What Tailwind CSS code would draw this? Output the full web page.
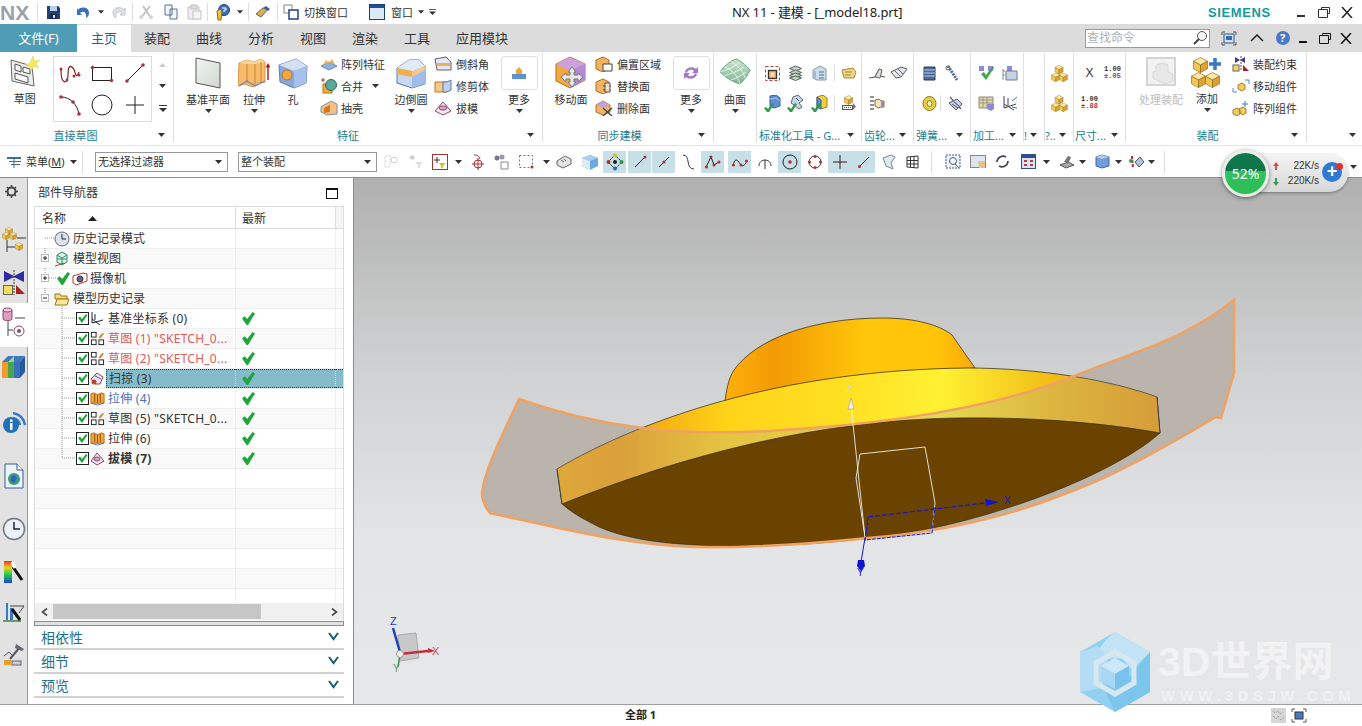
<!DOCTYPE html>
<html lang="zh">
<head>
<meta charset="utf-8">
<title>NX 11</title>
<script src="https://cdn.jsdelivr.net/npm/@tailwindcss/browser@4"></script>
</head>
<body class="m-0 overflow-hidden bg-white">
<svg class="absolute w-0 h-0">
  <symbol id="cap" viewBox="0 0 7 4"><path d="M0 0h7L3.5 4z" fill="#333"/></symbol>
  <symbol id="ck" viewBox="0 0 14 14"><path d="M0 7l3-2.500 2.500 3L11.500 0 14 1.500 6.500 14h-1.500z" fill="#1fa53a"/></symbol>
  <symbol id="gck" viewBox="0 0 10 9"><path d="M0 5l2-1 2 2 4-6 2 1-5 8H3z" fill="#2e9a4a"/></symbol>
  <symbol id="cb" viewBox="0 0 13 13"><rect x=".5" y=".5" width="12" height="12" fill="#fff" stroke="#222"/><path d="M2 6l2-1.500 2 2.500 4-5 1.500 1-5.500 8z" fill="#1fa53a"/></symbol>
  <symbol id="sk" viewBox="0 0 16 16"><g fill="#fff" stroke="#222"><rect x="1.500" y="1.500" width="5" height="5"/><rect x="1.500" y="9.500" width="5" height="5"/><rect x="9.500" y="9.500" width="5" height="5"/></g><path d="M9 7l4-5 2 1-4 5z" fill="#d8882a"/></symbol>
  <symbol id="ex" viewBox="0 0 16 16"><path d="M1 3l3-1 4 2 4-2 3 1v10H1z" fill="#f2a83c" stroke="#b86a10"/><path d="M5 3v9M8 4v9M11 3v9" stroke="#8a4c08"/><path d="M1 13l7 2 7-2" stroke="#5a6fc0" fill="none"/></symbol>
  <symbol id="cube" viewBox="0 0 16 17"><path d="M8 .5l7.500 4-7.500 4-7.500-4z" fill="#fbe8a6" stroke="#8a6a20" stroke-width=".7"/><path d="M.5 4.500l7.500 4v8l-7.500-4z" fill="#f3c850" stroke="#8a6a20" stroke-width=".7"/><path d="M15.500 4.500l-7.500 4v8l7.500-4z" fill="#dca232" stroke="#8a6a20" stroke-width=".7"/></symbol>
  <symbol id="yc" viewBox="0 0 20 20"><use href="#cube" x="4" y="0" width="11" height="11"/><use href="#cube" x="0" y="9" width="11" height="11"/><use href="#cube" x="9" y="9" width="11" height="11"/></symbol>
  <symbol id="more" viewBox="0 0 8 7"><path d="M0 .5h8" stroke="#333"/><path d="M0 3h8L4 7z" fill="#333"/></symbol>
</svg>

<div class="relative w-[1362px] h-[726px] overflow-hidden flex flex-col bg-white text-[#333] [font-family:'Noto_Sans','Noto_Sans_CJK_SC',sans-serif]">

  <!-- title bar -->
  <header class="h-[24px] flex items-center shrink-0 bg-white">
    <div class="w-[732px] flex items-center h-full">
      <div class="w-[37px] text-[21px] leading-none font-bold text-[#9aa1a8] [font-family:'Liberation_Sans',sans-serif]">NX</div>
      <div class="w-px h-[18px] bg-[#ddd]"></div>
      <div class="w-[30px] flex justify-center"><svg width="15" height="15"><path d="M1 1h11l2 2v11H1z" fill="#24406e"/><rect x="4" y="1" width="7" height="5" fill="#b9d0ee"/><rect x="4" y="9" width="7" height="5" fill="#16294a"/><rect x="7" y="10" width="2" height="3" fill="#d7e2f2"/></svg></div>
      <div class="w-[30px] flex justify-center"><svg width="15" height="14"><path d="M2 5c3-4 11-3 11 3 0 2-1 4-3 5 1-5-2-8-6-5l2 2H1V3z" fill="#3a6fc0"/></svg></div>
      <div class="w-[6px] flex justify-center"><svg width="6" height="4"><use href="#cap"/></svg></div>
      <div class="w-[28px] flex justify-center"><svg width="15" height="14"><path d="M13 5C10 1 2 2 2 8c0 2 1 4 3 5-1-5 2-8 6-5L9 10h5V3z" fill="#dde0e4" stroke="#c4c8cc"/></svg></div>
      <div class="w-px h-[18px] bg-[#ddd]"></div>
      <div class="w-[26px] flex justify-center"><svg width="16" height="16"><path d="M3 14l9-12M13 14L5 2" stroke="#c5c5c5" stroke-width="2"/><circle cx="3" cy="13" r="2" fill="#d5d5d5"/><circle cx="13" cy="13" r="2" fill="#d5d5d5"/></svg></div>
      <div class="w-[23px] flex justify-center"><svg width="14" height="16"><path d="M1 1h7v10H1zM6 5h7v10H6z" fill="#f4f6fa" stroke="#5a6f96"/></svg></div>
      <div class="w-[25px] flex justify-center"><svg width="15" height="16"><rect x="1" y="3" width="11" height="12" fill="#eee" stroke="#c4c4c4"/><rect x="4" y="1" width="6" height="4" fill="#ddd" stroke="#c4c4c4"/><rect x="6" y="7" width="8" height="8" fill="#f6f6f6" stroke="#c4c4c4"/></svg></div>
      <div class="w-px h-[18px] bg-[#ddd]"></div>
      <div class="w-[27px] flex justify-center"><svg width="18" height="18"><circle cx="11" cy="7" r="5.500" fill="#3e6fb8" stroke="#1d3f7a"/><path d="M4 8l3-2 2 2-1 9H5z" fill="#f0c23e" stroke="#8a6a10"/><path d="M9 5h4v2h-2v2" fill="none" stroke="#fff"/></svg></div>
      <div class="w-[10px] flex justify-center"><svg width="6" height="4"><use href="#cap"/></svg></div>
      <div class="w-[3px]"></div>
      <div class="w-px h-[18px] bg-[#ddd]"></div>
      <div class="w-[28px] flex justify-center"><svg width="16" height="14"><path d="M1 9l7-6 5 1-7 8z" fill="#d8b060" stroke="#7a6030"/><path d="M8 3l3-2 4 3-2 2z" fill="#3a5fb0"/></svg></div>
      <div class="w-px h-[18px] bg-[#ddd]"></div>
      <div class="w-[25px] flex justify-center"><svg width="16" height="16"><rect x="1" y="1" width="8" height="8" fill="#fff" stroke="#888"/><rect x="6" y="6" width="9" height="9" fill="#fff" stroke="#1f3f90" stroke-width="1.500"/></svg></div>
      <div class="text-[11px] leading-none w-[66px] pl-[1px]">切换窗口</div>
      <div class="w-[22px] flex justify-start"><svg width="16" height="16"><rect x=".5" y=".5" width="15" height="15" fill="#dce9f7" stroke="#1f3f7a"/><path d="M1 1h14v3H1z" fill="#1f4f9a"/></svg></div>
      <div class="text-[11px] leading-none w-[25px]">窗口</div>
      <div class="w-[9px] flex justify-center"><svg width="6" height="4"><use href="#cap"/></svg></div>
      <div class="w-[14px] flex justify-center"><svg width="7" height="6"><use href="#more"/></svg></div>
    </div>
    <div class="w-[476px] text-[13px] leading-none tracking-[-0.1px] text-[#222] whitespace-nowrap">NX 11 - 建模 - [_model18.prt]</div>
    <div class="w-[82px] text-[13px] leading-none font-bold tracking-[0.6px] text-[#159a9c] [font-family:'Liberation_Sans',sans-serif]">SIEMENS</div>
    <div class="w-[22px] flex justify-center pt-[8px]"><div class="w-[8px] h-[2px] bg-[#333]"></div></div>
    <div class="w-[24px] flex justify-center"><svg width="12" height="11"><path d="M3.500 2.500v-2h8v6h-2M.5 2.500h9v8h-9z" fill="none" stroke="#333"/></svg></div>
    <div class="w-[22px] flex justify-center"><svg width="12" height="11"><path d="M1 0l10 11M11 0L1 11" stroke="#222" stroke-width="1.500"/></svg></div>
  </header>

  <!-- tab bar -->
  <nav class="h-[28px] shrink-0 flex items-center bg-[#dcdcdc] text-[13px] leading-none">
    <div class="w-[77px] h-full flex items-center justify-center bg-[#4f9cb6] text-white">文件(F)</div>
    <div class="w-[54px] h-[27px] mt-px flex items-center justify-center bg-white text-[#146f84]">主页</div>
    <div class="w-[52px] text-center">装配</div>
    <div class="w-[52px] text-center">曲线</div>
    <div class="w-[52px] text-center">分析</div>
    <div class="w-[52px] text-center">视图</div>
    <div class="w-[52px] text-center">渲染</div>
    <div class="w-[52px] text-center">工具</div>
    <div class="w-[78px] text-center">应用模块</div>
    <div class="flex-1"></div>
    <div class="w-[125px] h-[19px] bg-white border border-[#999] flex items-center pl-[1px] text-[12px] text-[#b0b0b0] justify-between">查找命令<svg class="mr-[1px]" width="16" height="16"><circle cx="10" cy="6" r="4.500" fill="#f4f4f4" stroke="#555"/><path d="M7 9l-5 5" stroke="#444" stroke-width="2"/></svg></div>
    <div class="w-[38px] flex justify-center"><svg width="16" height="15"><path d="M1 4V1h3M12 1h3v3M15 11v3h-3M4 14H1v-3" fill="none" stroke="#555"/><rect x="3" y="3" width="10" height="9" fill="#d0dff0" stroke="#2a5a9a"/><rect x="5" y="5" width="6" height="4" fill="#3a6aaa"/></svg></div>
    <div class="w-[17px] flex justify-center"><svg width="14" height="8"><path d="M1 7l6-6 6 6" fill="none" stroke="#222" stroke-width="1.500"/></svg></div>
    <div class="w-[35px] flex justify-center"><div class="w-[14px] h-[14px] rounded-full bg-[#4a78c8] text-white text-[11px] font-bold leading-[14px] text-center">?</div></div>
    <div class="w-[6px] flex justify-center pt-[8px]"><div class="w-[8px] h-[2px] bg-[#111] shrink-0"></div></div>
    <div class="w-[38px] flex justify-center"><svg width="12" height="11"><path d="M3.500 2.500v-2h8v6h-2M.5 2.500h9v8h-9z" fill="none" stroke="#111"/></svg></div>
    <div class="w-[4px] flex justify-center"><svg class="shrink-0" width="12" height="11"><path d="M1 0l10 11M11 0L1 11" stroke="#111" stroke-width="1.500"/></svg></div>
    <div class="w-[14px]"></div>
  </nav>

  <!-- ribbon -->
  <section class="h-[94px] shrink-0 flex pt-[1px] text-[11px] leading-none border-b border-[#e4e4e4]">
    <!-- sketch -->
    <div class="w-[174px] h-[89px] flex flex-col border-r border-[#dedede]">
      <div class="h-[75px] flex">
        <div class="w-[50px] flex flex-col items-center pt-[3px]"><svg width="32" height="33"><path d="M2 4l21 6 2 20L3 25z" fill="#eee" stroke="#666"/><path d="M6 8l6 2v6l-6-2zM14 11l7 2v5l-7-2zM6 17l13 4v6L6 23z" fill="#f8f8f8" stroke="#555"/><path d="M24 0l1.500 5 5-1-3.500 4 3 4-5-1.500L22 15l-1-5-5-1 5-2z" fill="#f4e860" stroke="#d8d050" stroke-width=".5"/></svg><span class="mt-[4px]">草图</span></div>
        <div class="w-[100px] h-[66px] mt-[3px] ml-[3px] border border-[#dcdcdc] grid grid-cols-3 grid-rows-2 place-items-center">
          <svg width="24" height="22"><path d="M3 8c0 16 7 14 7 5s2-10 5-7 2 13 6 4" fill="none" stroke="#8a2020" stroke-width="1.200"/><circle cx="3" cy="7" r="1.500" fill="#b03030"/><circle cx="9" cy="18" r="1.500" fill="#b03030"/><circle cx="21" cy="13" r="1.500" fill="#b03030"/><circle cx="16" cy="14" r="1.500" fill="#b03030"/></svg>
          <svg width="24" height="20"><rect x="2.500" y="4.500" width="19" height="13" fill="none" stroke="#222"/><circle cx="2.500" cy="4.500" r="1.700" fill="#b03030"/><circle cx="21.500" cy="17.500" r="1.700" fill="#b03030"/></svg>
          <svg width="22" height="22"><path d="M3 19L19 3" stroke="#222"/><circle cx="3" cy="19" r="1.800" fill="#b03030"/><circle cx="19" cy="3" r="1.800" fill="#b03030"/></svg>
          <svg width="24" height="22"><path d="M3 3c9 0 16 7 18 17" fill="none" stroke="#222"/><circle cx="3" cy="3" r="1.800" fill="#b03030"/><circle cx="15" cy="8" r="1.800" fill="#b03030"/><circle cx="21" cy="20" r="1.800" fill="#b03030"/></svg>
          <svg width="22" height="22"><circle cx="11" cy="11" r="10" fill="none" stroke="#222"/></svg>
          <svg width="20" height="20"><path d="M10 1v18M1 10h18" stroke="#222"/></svg>
        </div>
        <div class="w-[21px] flex flex-col items-center justify-start pt-[10px] gap-[17px]">
          <svg width="7" height="4"><path d="M3.500 0L7 4H0z" fill="#ccc"/></svg>
          <svg width="7" height="4"><use href="#cap"/></svg>
          <svg width="8" height="7"><use href="#more"/></svg>
        </div>
      </div>
      <div class="h-[14px] flex items-center pr-[8px]"><span class="flex-1 text-center pr-[7px] text-[#1d7c90]">直接草图</span><svg width="7" height="4"><use href="#cap"/></svg></div>
    </div>
    <!-- features -->
    <div class="w-[369px] h-[89px] flex flex-col border-r border-[#dedede]">
      <div class="h-[75px] flex">
        <div class="w-[68px] flex flex-col items-center pt-[4px]"><svg width="28" height="32"><defs><linearGradient id="pl" x1="0" y1="0" x2="1" y2="1"><stop offset="0" stop-color="#f2f5f2"/><stop offset="1" stop-color="#cfd8cf"/></linearGradient></defs><path d="M2 1l24 5v25L2 26z" fill="url(#pl)" stroke="#555"/></svg><span class="mt-[5px]">基准平面</span><svg class="mt-[4px]" width="7" height="4"><use href="#cap"/></svg></div>
        <div class="w-[24px] flex flex-col items-center pt-[4px]"><svg class="shrink-0" width="32" height="32"><path d="M1 6l8-3 7 2 7-3 4 3v20l-7 1-5 4-9-3-6 2z" fill="#f5bb6a" stroke="#d89a46"/><path d="M1 6l8 1 8 0 10-2-4-3-7 3-7-2z" fill="#f9d69e"/><path d="M9 7v19M17 7v22M23 5v21" stroke="#d08a30"/><path d="M1 29l8-5 8 5 10-5" fill="none" stroke="#7080c0" stroke-width="1.200"/><path d="M30 9v14" stroke="#b02020" stroke-width="1.500"/><path d="M30 6l2.500 4.500h-5z" fill="#b02020"/></svg><span class="mt-[5px]">拉伸</span><svg class="mt-[4px]" width="7" height="4"><use href="#cap"/></svg></div>
        <div class="w-[54px] flex flex-col items-center pt-[4px]"><svg width="32" height="32"><path d="M2 8L19 2l11 7-1 17-12 5L3 25z" fill="#8aa8de" stroke="#5f7fb0"/><path d="M2 8L19 2l11 7-13 5z" fill="#d4e1f5"/><path d="M17 14l13-5-1 17-12 5z" fill="#a8c0ec"/><circle cx="10" cy="18" r="5" fill="#f3a840" stroke="#b97820"/></svg><span class="mt-[5px]">孔</span></div>
        <div class="w-[68px] flex flex-col">
          <div class="h-[22px] flex items-center gap-[3px]"><svg width="18" height="16"><path d="M1 10l8-4 8 4-8 4z" fill="#8fb0dc" stroke="#6a86b4"/><path d="M3 9l3-5 3 3zM9 7l3-4 3 5z" fill="#f2ad4c"/></svg>阵列特征</div>
          <div class="h-[22px] flex items-center gap-[3px]"><svg width="18" height="18"><path d="M1 3h4M3 1v4" stroke="#b03030"/><rect x="3" y="7" width="9" height="9" fill="#f3a840" stroke="#b97820"/><circle cx="11" cy="8" r="5.500" fill="#5aa89a" stroke="#2a6a66"/></svg>合并<svg class="ml-[6px]" width="7" height="4"><use href="#cap"/></svg></div>
          <div class="h-[22px] flex items-center gap-[3px]"><svg width="18" height="16"><path d="M1 7l10-6 6 3v10L7 15l-6-3z" fill="#f3c27e" stroke="#7b8fb0"/><path d="M4 8l6-3v7l-6 1z" fill="#d07820"/></svg>抽壳</div>
        </div>
        <div class="w-[46px] flex flex-col items-center pt-[4px]"><svg class="shrink-0" width="32" height="32"><path d="M2 11L14 3h10l6 6v18l-13 4L2 26z" fill="#c6d8f2" stroke="#5577aa"/><path d="M2 11L14 3h10l6 6-13 5z" fill="#e0ebf8"/><path d="M2 11l15 3v6L2 17z" fill="#f2ad4c"/><path d="M17 14l13-5 0 4-13 7z" fill="#f6c88a"/><path d="M17 20l13-7v14l-13 4z" fill="#a0bce8"/></svg><span class="mt-[5px] whitespace-nowrap">边倒圆</span><svg class="mt-[4px]" width="7" height="4"><use href="#cap"/></svg></div>
        <div class="w-[62px] flex flex-col">
          <div class="h-[22px] flex items-center gap-[4px]"><svg width="18" height="16"><path d="M1 3l11-2 5 5v8H3z" fill="#dfe8f6" stroke="#775566"/><path d="M3 7h13v3H3z" fill="#f2ad4c"/></svg>倒斜角</div>
          <div class="h-[22px] flex items-center gap-[4px]"><svg width="18" height="14"><path d="M1 3h12v10H1z" fill="#f5c887" stroke="#b97820"/><path d="M9 3h4l4-2v10l-4 2H9z" fill="#bcd0ee" stroke="#5577aa"/></svg>修剪体</div>
          <div class="h-[22px] flex items-center gap-[4px]"><svg width="18" height="16"><path d="M1 11L9 2l8 9-8 4z" fill="#f0e6f2" stroke="#8a4a6a"/><ellipse cx="9" cy="8" rx="4" ry="2" fill="#d6a6c8" stroke="#8a4a6a"/></svg>拔模</div>
        </div>
        <div class="w-[46px] flex flex-col items-center pt-[3px]"><div class="w-[37px] h-[34px] border border-[#e0e0e0] rounded-[3px] flex items-center justify-center shrink-0"><svg width="16" height="14"><rect x="1" y="8" width="14" height="5" fill="#5d93cc"/><path d="M5 8V4l3-3 3 3v4z" fill="#f0a83c"/></svg></div><span class="mt-[4px]">更多</span><svg class="mt-[4px]" width="7" height="4"><use href="#cap"/></svg></div>
      </div>
      <div class="h-[14px] flex items-center pr-[8px]"><span class="flex-1 text-center pr-[5px] text-[#1d7c90]">特征</span><svg width="7" height="4"><use href="#cap"/></svg></div>
    </div>
    <!-- sync -->
    <div class="w-[171px] h-[89px] flex flex-col border-r border-[#dedede]">
      <div class="h-[75px] flex">
        <div class="w-[52px] flex flex-col items-center pl-[4px] pt-[3px]"><svg width="32" height="33"><path d="M1 8l14-7 15 7v16l-15 8-14-7z" fill="#f3a840" stroke="#b07020"/><path d="M1 8l14-7 15 7-15 7z" fill="#cda0e0"/><path d="M15 15l15-7v16l-15 8z" fill="#b58ad8"/><path d="M17 11l4 5h-2v3h4v-2l5 4-5 5v-3h-4v3h2l-4 5-4-5h2v-3h-4v3l-5-5 5-4v2h4v-3h-2z" fill="#e7e7e7" stroke="#777"/></svg><span class="mt-[5px]">移动面</span></div>
        <div class="w-[77px] flex flex-col">
          <div class="h-[22px] flex items-center gap-[4px]"><svg width="18" height="16"><path d="M1 4l7-3 6 3v9l-6 3-7-3z" fill="#f3b462" stroke="#a86f26"/><path d="M8 8h9v7H8z" fill="#fff" stroke="#444"/></svg>偏置区域</div>
          <div class="h-[22px] flex items-center gap-[4px]"><svg width="18" height="16"><path d="M1 4l7-3 6 3v9l-6 3-7-3z" fill="#f3b462" stroke="#a86f26"/><path d="M8 8h8M8 12h8" stroke="#444"/><path d="M10 5h5v9h-5z" fill="#fff" fill-opacity=".7" stroke="#555"/></svg>替换面</div>
          <div class="h-[22px] flex items-center gap-[4px]"><svg width="18" height="16"><path d="M1 5l7-4 7 4v7l-7 3-7-3z" fill="#f3b462" stroke="#a86f26"/><path d="M1 5l7-4 7 4-7 3z" fill="#c4a0d8"/><path d="M8 8l9 8M17 8l-9 8" stroke="#444" stroke-width="1.300"/></svg>删除面</div>
        </div>
        <div class="w-[38px] flex flex-col items-center pt-[3px]"><div class="w-[37px] h-[34px] border border-[#e0e0e0] rounded-[3px] flex items-center justify-center shrink-0"><svg width="16" height="14"><path d="M2 6c1-5 8-6 11-3l2-2v6H9l2-2C9 3 5 3 4 7zM14 8c-1 5-8 6-11 3l-2 2V7h6L5 9c2 2 6 2 7-2z" fill="#a878c8"/></svg></div><span class="mt-[4px]">更多</span><svg class="mt-[4px]" width="7" height="4"><use href="#cap"/></svg></div>
      </div>
      <div class="h-[14px] flex items-center pr-[8px]"><span class="flex-1 text-center pr-[2px] text-[#1d7c90]">同步建模</span><svg width="7" height="4"><use href="#cap"/></svg></div>
    </div>
    <!-- surface -->
    <div class="w-[43px] h-[89px] flex flex-col border-r border-[#dedede]">
      <div class="flex flex-col items-center pt-[4px]"><svg class="shrink-0" width="32" height="32"><defs><linearGradient id="sf" x1="0" y1="0" x2="0" y2="1"><stop offset="0" stop-color="#c9e6cf"/><stop offset="1" stop-color="#7fb696"/></linearGradient></defs><path d="M1 15C7 7 13 3 18 2c5 3 10 7 13 11-2 5-6 10-10 14C14 25 7 21 1 15z" fill="url(#sf)" stroke="#6f9f86"/><path d="M6 10c6 2 12 7 15 17M12 5c6 3 12 8 14 16M1 15c7-2 14-5 19-9M5 19c7-2 14-5 20-9M12 23c6-2 11-5 15-8" stroke="#f2f8f3" stroke-width=".8" fill="none"/></svg><span class="mt-[5px]">曲面</span><svg class="mt-[4px]" width="7" height="4"><use href="#cap"/></svg></div>
    </div>
    <!-- std tools -->
    <div class="w-[105px] h-[89px] flex flex-col border-r border-[#dedede]">
      <div class="h-[75px] pt-[5px]">
        <div class="h-[30px] flex items-center pl-[4px]">
          <div class="w-[24px] flex justify-center"><svg width="17" height="17"><rect x="1.500" y="1.500" width="14" height="14" fill="none" stroke="#c04040" stroke-dasharray="3 2"/><rect x="4.500" y="5.500" width="8" height="8" fill="#f0b060" stroke="#333" stroke-width="1.300"/><rect x="6.500" y="7.500" width="4" height="4" fill="#fbe0b0"/></svg></div>
          <div class="w-[24px] flex justify-center"><svg width="15" height="16"><g fill="#c4d4c0" stroke="#55635a"><path d="M7.500 1l6 2.500-6 2.500-6-2.500z"/><path d="M7.500 5l6 2.500-6 2.500-6-2.500z"/><path d="M7.500 8l6 2.500-6 2.500-6-2.500z"/><path d="M7.500 11l6 2-6 2.500-6-2.500z"/></g></svg></div>
          <div class="w-[24px] flex justify-center"><svg width="15" height="16"><path d="M1 5l7-4 6 3v11H5l-4-2z" fill="#c8dcea" stroke="#8a9aa6"/><path d="M7 7h5M7 10h5M7 13h5" stroke="#4f7a92"/><path d="M3 6v7" stroke="#7f9aaa"/></svg></div>
          <div class="w-px h-[16px] bg-[#ddd] mx-[3px]"></div>
          <div class="w-[24px] flex justify-center"><svg width="16" height="12"><path d="M1 3l11-2 3 4-2 6-10 0z" fill="#ecd68a" stroke="#a88a30"/><path d="M4 5h7M4 8h6" stroke="#a88a30"/></svg></div>
        </div>
        <div class="h-[30px] flex items-center pl-[4px]">
          <div class="w-[24px] flex justify-center"><svg width="17" height="17"><path d="M6 1l6-1 4 3v8l-6 2-4-2z" fill="#5f8fd0" stroke="#2f5fa0"/><path d="M6 4l6-1 4 3" stroke="#a8c8ee" fill="none"/><use href="#gck" x="0" y="8" width="10" height="9"/></svg></div>
          <div class="w-[24px] flex justify-center"><svg width="17" height="17"><path d="M6 2l5-2 5 5-4 3 3 4-3 2-5-4-3-2z" fill="#c7d4e4" stroke="#667"/><path d="M9 3l3 3" stroke="#4a6a9a"/><use href="#gck" x="0" y="8" width="10" height="9"/></svg></div>
          <div class="w-[24px] flex justify-center"><svg width="17" height="17"><path d="M6 2l6-2 4 3v9l-6 2-4-2z" fill="#f0cf3c" stroke="#a08020"/><path d="M6 2l4 3v9l-4-2z" fill="#5f8fd0" stroke="#2f5fa0"/><use href="#gck" x="0" y="8" width="10" height="9"/></svg></div>
          <div class="w-px h-[16px] bg-[#ddd] mx-[3px]"></div>
          <div class="w-[24px] flex justify-center"><svg width="16" height="16"><use href="#cube" x="3" y="0" width="9" height="10"/><rect x="1.500" y="10.500" width="10" height="4" fill="#fff" stroke="#555"/><path d="M3 12.500h7" stroke="#555" stroke-dasharray="1 1"/><path d="M12 8l3 3.500-3 3.500z" fill="#9c5ac0"/></svg></div>
        </div>
      </div>
      <div class="h-[14px] flex items-center pr-[7px] pl-[2px]"><span class="flex-1 whitespace-nowrap text-[#1d7c90]">标准化工具 - G...</span><svg width="7" height="4"><use href="#cap"/></svg></div>
    </div>
    <!-- gear -->
    <div class="w-[52px] h-[89px] flex flex-col border-r border-[#dedede]">
      <div class="h-[75px] pt-[5px] pl-[4px]">
        <div class="h-[30px] flex items-center gap-0">
          <div class="w-[22px] flex justify-center"><svg width="18" height="13"><path d="M1 11l6-1 4-8 2 1-1 6 5 1" fill="none" stroke="#555"/><path d="M7 10l4-8 3 1-2 8z" fill="#ddd" stroke="#666"/></svg></div>
          <div class="w-[22px] flex justify-center"><svg width="18" height="14"><path d="M1 6l5 6 5-1 6-8-6-2z" fill="#e3e7ea" stroke="#556"/><path d="M5 5l5 5M8 3l5 5" stroke="#667"/></svg></div>
        </div>
        <div class="h-[30px] flex items-center"><div class="w-[22px] flex justify-center"><svg width="17" height="14"><path d="M1 1h4M1 5h4M1 9h4M1 13h4" stroke="#222"/><path d="M6 4l4-1 2 2h3v6h-3l-3 1-3-2z" fill="#f1e2c0" stroke="#8a7040"/><rect x="12" y="5" width="3" height="6" fill="#8a8ad0"/></svg></div></div>
      </div>
      <div class="h-[14px] flex items-center pr-[7px] pl-[2px]"><span class="flex-1 whitespace-nowrap text-[#1d7c90]">齿轮...</span><svg width="7" height="4"><use href="#cap"/></svg></div>
    </div>
    <!-- spring -->
    <div class="w-[57px] h-[89px] flex flex-col border-r border-[#dedede]">
      <div class="h-[75px] pt-[5px] pl-[4px]">
        <div class="h-[30px] flex items-center">
          <div class="w-[22px] flex justify-center"><svg width="13" height="15"><path d="M1 1h11v13H1z" fill="#4a6a9a" stroke="#2a3a5a"/><path d="M1 4h11M1 7h11M1 10h11" stroke="#b8c8e0"/></svg></div>
          <div class="w-[24px] flex justify-center"><svg width="14" height="17"><path d="M3 1l9 14" stroke="#4a6aa0" stroke-width="3" stroke-dasharray="2 1"/><circle cx="3" cy="3" r="2" fill="none" stroke="#666"/></svg></div>
        </div>
        <div class="h-[30px] flex items-center">
          <div class="w-[22px] flex justify-center"><svg width="15" height="15"><ellipse cx="7.500" cy="7.500" rx="6.500" ry="7" fill="#e8cf4a" stroke="#8a7a20"/><ellipse cx="7.500" cy="7.500" rx="2.500" ry="3" fill="#fff6b0" stroke="#8a7a20"/></svg></div>
          <div class="w-px h-[16px] bg-[#ddd]"></div>
          <div class="w-[28px] flex justify-center"><svg width="16" height="15"><path d="M3 1l11 12" stroke="#667" stroke-width="1.500"/><path d="M2 7l8-4 5 5-6 6z" fill="#b5c9e4" stroke="#556" fill-opacity=".8"/><path d="M5 8l6 4M7 6l5 4" stroke="#556"/></svg></div>
        </div>
      </div>
      <div class="h-[14px] flex items-center pr-[7px] pl-[2px]"><span class="flex-1 whitespace-nowrap text-[#1d7c90]">弹簧...</span><svg width="7" height="4"><use href="#cap"/></svg></div>
    </div>
    <!-- machining -->
    <div class="w-[53px] h-[89px] flex flex-col border-r border-[#dedede]">
      <div class="h-[75px] pt-[5px] pl-[4px]">
        <div class="h-[30px] flex items-center">
          <div class="w-[23px] flex justify-center"><svg width="17" height="16"><path d="M1 1h5v5H1zM10 1h5v5h-5z" fill="#8a8ad8"/><path d="M3 9l3-2 2 3 7-9 1 2-8 12z" fill="#42a84c"/></svg></div>
          <div class="w-[23px] flex justify-center"><svg width="16" height="16"><path d="M5 1h5v5H5z" fill="#8a8ad8"/><path d="M4 6h11v9H4z" fill="#c4d4e8" stroke="#778"/><path d="M1 4v11M1 6h2M1 10h2" stroke="#888"/></svg></div>
        </div>
        <div class="h-[30px] flex items-center">
          <div class="w-[23px] flex justify-center"><svg width="17" height="15"><path d="M1 1h14v11H1z" fill="#e8d6a6" stroke="#888"/><path d="M1 4h14M1 7h14M5 1v11M9 1v11" stroke="#998"/><path d="M9 8h7v5l-3 2-4-2z" fill="#8a8ad8"/></svg></div>
          <div class="w-[23px] flex justify-center"><svg width="16" height="16"><path d="M2 1v12l12-4M2 9l10 6M6 3v8" fill="none" stroke="#445"/><path d="M10 6l5-4M10 12l5 1" stroke="#3a8a4a"/></svg></div>
        </div>
      </div>
      <div class="h-[14px] flex items-center pr-[7px] pl-[2px]"><span class="flex-1 whitespace-nowrap text-[#1d7c90]">加工...</span><svg width="7" height="4"><use href="#cap"/></svg></div>
    </div>
    <!-- small -->
    <div class="w-[21px] h-[89px] flex flex-col border-r border-[#dedede]">
      <div class="h-[75px]"></div>
      <div class="h-[14px] flex items-center pr-[7px]"><span class="flex-1 text-right pr-[3px] text-[#1d7c90]">!</span><svg width="7" height="4"><use href="#cap"/></svg></div>
    </div>
    <div class="w-[29px] h-[89px] flex flex-col border-r border-[#dedede]">
      <div class="h-[75px] pt-[5px]">
        <div class="h-[30px] flex items-center justify-center"><svg width="17" height="17" viewBox="0 0 20 20"><use href="#yc"/></svg></div>
        <div class="h-[30px] flex items-center justify-center"><svg width="17" height="17" viewBox="0 0 20 20"><use href="#yc"/></svg></div>
      </div>
      <div class="h-[14px] flex items-center pr-[7px]"><span class="flex-1 text-[#1d7c90]">?..</span><svg width="7" height="4"><use href="#cap"/></svg></div>
    </div>
    <!-- dim -->
    <div class="w-[52px] h-[89px] flex flex-col border-r border-[#dedede]">
      <div class="h-[75px] pt-[5px] pl-[4px]">
        <div class="h-[30px] flex items-center">
          <div class="w-[23px] text-center text-[12px] [font-family:'Liberation_Sans',sans-serif]">X</div>
          <div class="w-[23px] text-center text-[7px] leading-[7px] font-bold [font-family:'Liberation_Mono',monospace]">1.00<br><span class="text-[#a84040]">±.05</span></div>
        </div>
        <div class="h-[30px] flex items-center">
          <div class="w-[23px] text-center text-[7px] leading-[7px] font-bold [font-family:'Liberation_Mono',monospace]">1.00<br><span class="text-[#a84040]">±.88</span></div>
        </div>
      </div>
      <div class="h-[14px] flex items-center pr-[7px] pl-[1px]"><span class="flex-1 whitespace-nowrap text-[#1d7c90]">尺寸...</span><svg width="7" height="4"><use href="#cap"/></svg></div>
    </div>
    <!-- assembly -->
    <div class="w-[181px] h-[89px] flex flex-col border-r border-[#dedede]">
      <div class="h-[75px] flex">
        <div class="w-[70px] flex flex-col items-center pt-[4px]"><svg width="30" height="32"><path d="M1 1h28v27H1z" fill="#f2f2f2" stroke="#d4d4d4" stroke-width="2"/><path d="M10 8l7-2 5 2v7l5 2v7l-7 3-8-3-5-3v-6l3-1z" fill="#e8e8e8" stroke="#d8d8d8"/></svg><span class="mt-[5px] text-[#bdbdbd] whitespace-nowrap">处理装配</span></div>
        <div class="w-[22px] flex flex-col items-center pt-[3px]"><svg class="shrink-0" width="32" height="33"><use href="#cube" x="2" y="1" width="15" height="16"/><use href="#cube" x="0" y="16" width="15" height="16"/><use href="#cube" x="14" y="16" width="15" height="16"/><path d="M24 2v12M18 8h12" stroke="#3a7ac8" stroke-width="3.500"/></svg><span class="mt-[4px] whitespace-nowrap">添加</span><svg class="mt-[4px]" width="7" height="4"><use href="#cap"/></svg></div>
        <div class="flex-1 flex flex-col pl-[14px]">
          <div class="h-[22px] flex items-center gap-[3px] whitespace-nowrap"><svg class="shrink-0" width="18" height="16"><path d="M3 1l5 3 5-3v6l-5-3-5 3z" fill="#3a3a9a"/><path d="M9 0v15" stroke="#555" stroke-dasharray="2 1"/><rect x="1" y="9" width="6" height="6" fill="#f5d370" stroke="#665"/><path d="M11 15V9l6 6z" fill="#a82020"/></svg>装配约束</div>
          <div class="h-[22px] flex items-center gap-[3px] whitespace-nowrap"><svg class="shrink-0" width="18" height="14"><path d="M1 9v4h4M13 1h4v4" fill="none" stroke="#4a8ad0"/><path d="M6 6l4-2 3 2v4l-3 2-4-2z" fill="#f3cb60" stroke="#a08030"/></svg>移动组件</div>
          <div class="h-[22px] flex items-center gap-[3px] whitespace-nowrap"><svg class="shrink-0" width="18" height="16"><path d="M13 1v6M10 4h6" stroke="#3a7ac8"/><path d="M1 10l4-2 3 2v4l-3 2-4-2zM7 9l4-2 3 2v4l-3 2-3-2z" fill="#f3cb60" stroke="#a08030"/></svg>阵列组件</div>
        </div>
      </div>
      <div class="h-[14px] flex items-center pr-[8px]"><span class="flex-1 text-center pr-[2px] text-[#1d7c90]">装配</span><svg width="7" height="4"><use href="#cap"/></svg></div>
    </div>
    <div class="flex-1 h-[89px] flex flex-col">
      <div class="h-[75px]"></div>
      <div class="h-[14px] flex items-center justify-end pr-[6px]"><svg width="7" height="4"><use href="#cap"/></svg></div>
    </div>
  </section>

  <!-- toolbar -->
  <section class="h-[32px] shrink-0 flex items-center text-[11px] leading-none border-b border-[#8c8c8c] bg-white">
    <svg class="ml-[6px]" width="16" height="14"><path d="M1 2h14v2H1zM3 6h12v1H3zM5 9h9v1H5z" fill="#3f6f8f"/><path d="M8 4v9" stroke="#3f6f8f"/></svg>
    <span class="ml-[4px] w-[44px]">菜单(<u>M</u>)</span>
    <svg width="7" height="4"><use href="#cap"/></svg>
    <div class="w-px h-[22px] bg-[#ddd] ml-[5px]"></div>
    <div class="ml-[12px] w-[133px] h-[20px] border border-[#999] flex items-center justify-between px-[2px]">无选择过滤器<svg class="mr-[3px]" width="7" height="4"><use href="#cap"/></svg></div>
    <div class="ml-[10px] w-[139px] h-[20px] border border-[#999] flex items-center justify-between px-[2px]">整个装配<svg class="mr-[3px]" width="7" height="4"><use href="#cap"/></svg></div>
    <div class="ml-[3px] w-[20px] flex justify-center"><svg width="17" height="16"><path d="M3 3l5-2v12H3z" fill="none" stroke="#d0d0d0" stroke-dasharray="2 1"/><circle cx="12" cy="6" r="3" fill="none" stroke="#d0d0d0"/></svg></div>
    <div class="ml-[6px] w-[20px] flex justify-center"><svg width="16" height="15"><path d="M1 3l4-2 2 3-3 2z" fill="#ccc"/><path d="M7 8h8l-3 3v3h-2v-3z" fill="#ddd"/></svg></div>
    <div class="ml-[4px] w-[20px] flex justify-center"><svg width="16" height="16"><rect x=".5" y=".5" width="15" height="15" fill="#fff" stroke="#a83030"/><path d="M5 3v6M2 6h6" stroke="#333"/><path d="M7 9h7l-3 3v2H9v-2z" fill="#e8bc30"/></svg></div>
    <div class="ml-[5px] w-[7px]"><svg width="7" height="4"><use href="#cap"/></svg></div>
    <div class="ml-[3px] w-[24px] flex justify-center"><svg width="18" height="16"><path d="M6 1a5 5 0 0 1 6 4" fill="none" stroke="#555"/><path d="M10 4v12M4 10h12" stroke="#b03030"/><circle cx="10" cy="10" r="4" fill="none" stroke="#b03030"/></svg></div>
    <div class="w-[24px] flex justify-center"><svg width="16" height="16"><circle cx="4" cy="4" r="2.500" fill="#778"/><circle cx="9" cy="3" r="2.500" fill="#99a"/><path d="M8 8h7v7H8z" fill="none" stroke="#888"/></svg></div>
    <div class="w-[25px] flex justify-center"><svg width="16" height="15"><rect x="1.500" y="1.500" width="13" height="12" fill="none" stroke="#777" stroke-dasharray="2 2"/><circle cx="14" cy="13" r="1.500" fill="#b03030"/></svg></div>
    <div class="ml-[5px] w-[7px]"><svg width="7" height="4"><use href="#cap"/></svg></div>
    <div class="ml-[1px] w-[25px] flex justify-center"><svg width="16" height="14"><path d="M1 6l8-5 6 3v5l-8 4-6-3z" fill="#e3e3e3" stroke="#666"/><path d="M5 5l3 2M8 4l2 2" stroke="#666"/></svg></div>
    <div class="w-[27px] h-[22px] flex justify-center items-center"><svg width="18" height="16"><path d="M1 4l8-3 8 3v8l-8 4-8-4z" fill="#6ea7e0"/><path d="M1 4l8 3v9l-8-4z" fill="#dbe9f8"/><path d="M1 4l8-3 8 3-8 3z" fill="#a9cdf0"/></svg></div>
    <div class="w-[23px] h-[22px] bg-[#c7e0e8] flex justify-center items-center"><svg width="18" height="18"><path d="M2 9l7-7 7 7-7 7z" fill="none" stroke="#1a1a1a" stroke-dasharray="2 1"/><circle cx="9" cy="2.500" r="2" fill="#d8c030"/><circle cx="2.500" cy="9" r="2" fill="#b03030"/><circle cx="15.500" cy="9" r="2" fill="#2a9a40"/><circle cx="9" cy="15.500" r="2" fill="#2a6ac0"/><circle cx="9" cy="9" r="2" fill="#222"/></svg></div>
    <div class="ml-[2px] w-[23px] h-[22px] bg-[#c7e0e8] flex justify-center items-center"><svg width="14" height="14"><path d="M2 12L12 2" stroke="#222"/><circle cx="12" cy="2" r="1.500" fill="#b03030"/></svg></div>
    <div class="ml-[1px] w-[23px] h-[22px] bg-[#c7e0e8] flex justify-center items-center"><svg width="14" height="14"><path d="M2 12L12 2" stroke="#222"/><circle cx="7" cy="7" r="1.500" fill="#b03030"/></svg></div>
    <div class="w-[26px] flex justify-center"><svg width="14" height="16"><path d="M2 1c8 0 2 14 11 14" fill="none" stroke="#333"/></svg></div>
    <div class="w-[23px] h-[22px] bg-[#c7e0e8] flex justify-center items-center"><svg width="16" height="14"><path d="M1 12L6 2l3 8 5-3" fill="none" stroke="#222"/><circle cx="6" cy="2" r="1.500" fill="#b03030"/><circle cx="1.500" cy="12" r="1.500" fill="#b03030"/><circle cx="9" cy="10" r="1.500" fill="#b03030"/><circle cx="14" cy="7" r="1.500" fill="#b03030"/></svg></div>
    <div class="ml-[4px] w-[23px] h-[22px] bg-[#c7e0e8] flex justify-center items-center"><svg width="16" height="12"><path d="M1 9c3-10 6-2 8 0s4 0 6-4" fill="none" stroke="#222"/><circle cx="1.500" cy="9" r="1.500" fill="#b03030"/><circle cx="9" cy="9" r="1.500" fill="#b03030"/><circle cx="14.500" cy="5" r="1.500" fill="#b03030"/></svg></div>
    <div class="w-[27px] flex justify-center"><svg width="14" height="14"><path d="M7 5v9M1 11c0-4 3-6 6-6s6 2 6 6" fill="none" stroke="#333"/></svg></div>
    <div class="w-[23px] h-[22px] bg-[#c7e0e8] flex justify-center items-center"><svg width="16" height="16"><circle cx="8" cy="8" r="7" fill="none" stroke="#222"/><circle cx="8" cy="8" r="1.800" fill="#b03030"/></svg></div>
    <div class="w-[27px] flex justify-center"><svg width="14" height="14"><circle cx="7" cy="7" r="6" fill="none" stroke="#333"/><circle cx="1.500" cy="7" r="1.500" fill="#c03030"/><circle cx="12.500" cy="7" r="1.500" fill="#c03030"/><circle cx="7" cy="1.500" r="1.500" fill="#c03030"/><circle cx="7" cy="12.500" r="1.500" fill="#c03030"/></svg></div>
    <div class="w-[24px] h-[22px] bg-[#c7e0e8] flex justify-center items-center"><svg width="14" height="14"><path d="M7 0v14M0 7h14" stroke="#222"/><circle cx="7" cy="7" r="1.300" fill="#b03030"/></svg></div>
    <div class="w-[23px] h-[22px] bg-[#c7e0e8] flex justify-center items-center"><svg width="14" height="14"><path d="M2 12L12 2" stroke="#222"/><circle cx="2.500" cy="11.500" r="1.500" fill="#b03030"/></svg></div>
    <div class="ml-[1px] w-[25px] flex justify-center"><svg width="15" height="16"><path d="M2 4l8-3 4 2-4 6 2 6-7-3z" fill="#dfe9ee" stroke="#7a8a96"/></svg></div>
    <div class="w-[23px] flex justify-center"><svg width="13" height="14"><path d="M1 2l11-1v12l-11-1zM4.500 2v10M8 1.500v11M1 5.500h11M1 9h11" fill="none" stroke="#333"/></svg></div>
    <div class="w-px h-[22px] bg-[#ddd] ml-[7px]"></div>
    <div class="ml-[9px] w-[24px] flex justify-center"><svg width="16" height="15"><rect x="1" y="1" width="14" height="13" fill="#f2f5fa" stroke="#465a8a" stroke-dasharray="2 1"/><circle cx="8" cy="7" r="3.500" fill="none" stroke="#467"/><path d="M10 10l4 4" stroke="#467"/></svg></div>
    <div class="w-[25px] flex justify-center"><svg width="16" height="14"><rect x=".5" y=".5" width="15" height="12" fill="#dce6f0" stroke="#888"/><path d="M8 6h7v7H9z" fill="#e9c188"/></svg></div>
    <div class="w-[25px] flex justify-center"><svg width="15" height="15"><path d="M2 8a6 6 0 0 1 9-5M13 7a6 6 0 0 1-9 5" fill="none" stroke="#445" stroke-width="1.700"/></svg></div>
    <div class="w-[27px] flex justify-center"><svg width="15" height="15"><rect x=".5" y=".5" width="14" height="14" fill="#d8e4f6" stroke="#2f4f8f"/><rect x="1" y="1" width="13" height="3" fill="#2f4f8f"/><rect x="3" y="6" width="3" height="2" fill="#b04040"/><rect x="9" y="6" width="3" height="2" fill="#b04040"/><rect x="3" y="10" width="3" height="2" fill="#b04040"/><rect x="9" y="10" width="3" height="2" fill="#b04040"/></svg></div>
    <div class="ml-[1px] w-[7px]"><svg width="7" height="4"><use href="#cap"/></svg></div>
    <div class="w-[25px] ml-[4px] flex justify-center"><svg width="16" height="14"><path d="M1 10l8-3 6 3-8 3z" fill="#a8a8a8" stroke="#555"/><path d="M5 7l4-6 3 1-2 5z" fill="#777"/></svg></div>
    <div class="w-[7px]"><svg width="7" height="4"><use href="#cap"/></svg></div>
    <div class="ml-[4px] w-[25px] flex justify-center"><svg width="15" height="15"><path d="M1 3l6-2 7 2v9l-7 2-6-2z" fill="#6e9edb" stroke="#4a6a9a"/><path d="M1 3l6 2 7-2-7-2z" fill="#b0cdf0"/></svg></div>
    <div class="w-[7px]"><svg width="7" height="4"><use href="#cap"/></svg></div>
    <div class="ml-[1px] w-[25px] flex justify-center"><svg width="16" height="14"><path d="M4 1l1 12" stroke="#aa3030" stroke-width="2" stroke-dasharray="3 1"/><path d="M7 7l5-5 4 5-5 5z" fill="#a8c4e4" stroke="#556"/><circle cx="3" cy="6" r="2" fill="#3a9a4a"/></svg></div>
    <div class="w-[7px]"><svg width="7" height="4"><use href="#cap"/></svg></div>
    <div class="w-px h-[22px] bg-[#ddd] ml-[9px]"></div>
  </section>

  <!-- main -->
  <main class="flex-1 flex min-h-0">
    <!-- left strip -->
    <aside class="w-[28px] shrink-0 bg-[#e2e2e2] border-r border-[#9a9a9a] flex flex-col">
      <div class="h-[26px] flex items-center justify-center -ml-[5px]"><svg width="15" height="15" viewBox="0 0 15 15"><circle cx="7.500" cy="7.500" r="4" fill="none" stroke="#444" stroke-width="2"/><path d="M7.500 1v2M7.500 12v2M1 7.500h2M12 7.500h2M3 3l1.500 1.500M10.500 10.500 12 12M3 12l1.500-1.500M10.500 4.500 12 3" stroke="#444" stroke-width="1.500"/></svg></div>
      <div class="h-[36px] mt-[18px] flex items-center justify-center"><svg width="24" height="26"><use href="#cube" x="3" y="0" width="8" height="8"/><use href="#cube" x="0" y="5" width="8" height="8"/><use href="#cube" x="7" y="5" width="8" height="8"/><use href="#cube" x="13" y="15" width="8" height="9"/><path d="M5 13v12M5 20h8M15 11h9" stroke="#333" fill="none"/></svg></div>
      <div class="h-[41px] mt-[4px] flex items-center justify-center"><svg width="26" height="26"><path d="M3 1l10 5 10-5v11l-10-5-10 5z" fill="#2d2da0"/><path d="M13 0v25" stroke="#333" stroke-dasharray="2 1"/><rect x="2.500" y="15.500" width="9" height="9" fill="#f4de60" stroke="#665"/><path d="M15 24v-9l9 9z" fill="#a82020"/></svg></div>
      <div class="h-[44px] -mr-px pb-[6px] bg-white flex items-center justify-center"><svg width="24" height="32"><path d="M1 4v9c0 2 9 2 9 0V4z" fill="#dba0c0" stroke="#8a4a6a"/><ellipse cx="5.500" cy="4" rx="4.500" ry="2" fill="#f0cce0" stroke="#8a4a6a"/><path d="M6 15v15M6 24h5M13 12h10" stroke="#444" fill="none"/><circle cx="17" cy="25" r="5" fill="none" stroke="#8a4a6a"/><circle cx="17" cy="25" r="2" fill="#8a4a6a"/></svg></div>
      <div class="h-[40px] flex items-center justify-center"><svg width="26" height="24"><path d="M1 7l6-6h17l-5 6v16H1z" fill="#3d7ac0"/><path d="M1 7h6v16H1z" fill="#f39a2c"/><path d="M7 7h6v16H7z" fill="#48a848"/><path d="M7 7l6-6v6z" fill="#9ad09a"/><path d="M13 7h6v16h-6z" fill="#3a6fc0"/><path d="M19 7l5-6v16l-5 6z" fill="#2a5a9a"/></svg></div>
      <div class="h-[40px] mt-[15px] flex items-center justify-center"><svg width="26" height="26"><path d="M12 4a14 14 0 0 1 12 12M12 9a9 9 0 0 1 7 7" fill="none" stroke="#3a7ac0" stroke-width="2.500"/><circle cx="10" cy="16" r="8" fill="#2170b8"/><rect x="9" y="14" width="2.500" height="7" fill="#fff"/><rect x="9" y="10.500" width="2.500" height="2.500" fill="#fff"/></svg></div>
      <div class="h-[40px] mt-[14px] flex items-center justify-center"><svg width="20" height="26"><path d="M1 1h12l6 6v18H1z" fill="#eef3f8" stroke="#2f5f9f"/><path d="M13 1v6h6" fill="#fff" stroke="#2f5f9f"/><circle cx="10" cy="16" r="6" fill="#3a9a7a"/><path d="M7 14l3-2 3 3-3 5-3-2z" fill="#3060c0"/></svg></div>
      <div class="h-[40px] mt-[13px] flex items-center justify-center"><svg width="24" height="24"><circle cx="12" cy="12" r="10.500" fill="#eef2f8" stroke="#6a7a8a" stroke-width="1.500"/><path d="M12 5v7h6" fill="none" stroke="#223" stroke-width="1.500"/></svg></div>
      <div class="h-[40px] mt-[3px] flex items-center justify-center"><svg width="22" height="24"><defs><linearGradient id="rb" x1="0" y1="0" x2="0" y2="1"><stop offset="0" stop-color="#f03020"/><stop offset=".3" stop-color="#f0d020"/><stop offset=".6" stop-color="#20d040"/><stop offset="1" stop-color="#2040e0"/></linearGradient></defs><rect x="1" y="1" width="8" height="22" fill="url(#rb)"/><path d="M10 7l9 13" stroke="#111" stroke-width="3"/><path d="M9 2l3 6" stroke="#fff" stroke-width="3"/></svg></div>
      <div class="h-[40px] flex items-center justify-center"><svg width="24" height="22"><path d="M4 2h2v17H4zM8 7h3v12H8z" fill="#3a7ac0"/><path d="M1 20h18" stroke="#6a9a6a" stroke-width="2"/><path d="M8 5l14 0-5 7" fill="none" stroke="#444"/><path d="M10 8l8 11" stroke="#111" stroke-width="3"/></svg></div>
      <div class="h-[40px] mt-[3px] flex items-center justify-center"><svg width="24" height="24"><path d="M8 16L18 4" stroke="#556" stroke-width="2"/><path d="M14 1l8 5-2 2-7-3z" fill="#667"/><path d="M2 13l5-4 3 3" fill="none" stroke="#556"/><rect x="2" y="17" width="7" height="5" fill="#e8a030"/><rect x="10" y="18" width="9" height="4" fill="#ccc" stroke="#667"/></svg></div>
    </aside>

    <!-- navigator -->
    <div class="w-[325px] shrink-0 bg-white pl-[6px] pr-[9px] flex flex-col">
      <div class="h-[28px] flex items-center justify-between pl-[4px] pr-[6px] pt-[2px] text-[12px] leading-none">部件导航器<div class="w-[12px] h-[11px] border border-[#111] border-t-2"></div></div>
      <div class="h-[415px] border border-[#dcdcdc] border-b-0 flex flex-col relative text-[12px] leading-none">
        <!-- header -->
        <div class="h-[22px] flex border-b border-[#dcdcdc] bg-white pt-0">
          <div class="w-[200px] flex items-center pl-[7px] pt-[2px]">名称<svg class="ml-[22px]" width="9" height="5"><path d="M4.500 0L9 5H0z" fill="#222"/></svg></div>
          <div class="w-[100px] border-l border-[#dcdcdc] flex items-center pl-[6px] pt-[2px]">最新</div>
          <div class="flex-1 border-l border-[#dcdcdc] bg-[#f4f4f4]"></div>
        </div>
        <!-- rows -->
        <div class="flex-1 flex flex-col tracking-[0.25px]">
          <div class="h-[20px] flex border-b border-[#efefef]"><div class="w-[200px] flex items-center pl-[19px]"><svg width="16" height="16"><circle cx="8" cy="8" r="7" fill="#dde3ec" stroke="#667"/><path d="M8 3v5h4" fill="none" stroke="#223"/></svg><span class="ml-[3px] tracking-normal">历史记录模式</span></div><div class="w-[100px] border-l border-[#efefef]"></div><div class="flex-1 border-l border-[#efefef]"></div></div>
          <div class="h-[20px] flex border-b border-[#efefef] bg-[#f9f9f9]"><div class="w-[200px] flex items-center pl-[19px]"><svg width="16" height="16"><path d="M3 4l5-3 5 3v7l-5 3-5-3z" fill="#dff2e6" stroke="#2f8f6a"/><path d="M3 4l5 3 5-3M8 7v7M3 8l10 0" stroke="#2f8f6a" fill="none"/><path d="M1 15l9-3" stroke="#c04030"/></svg><span class="ml-[3px] tracking-normal">模型视图</span></div><div class="w-[100px] border-l border-[#efefef]"></div><div class="flex-1 border-l border-[#efefef]"></div></div>
          <div class="h-[20px] flex border-b border-[#efefef]"><div class="w-[200px] flex items-center pl-[22px]"><svg width="13" height="13"><use href="#ck"/></svg><svg class="ml-[2px]" width="16" height="16"><path d="M1 5l10-3 4 1v7L4 14l-3-2z" fill="#fff" stroke="#c03030"/><circle cx="8" cy="8" r="3" fill="#667" stroke="#334"/></svg><span class="ml-[2px] tracking-normal">摄像机</span></div><div class="w-[100px] border-l border-[#efefef]"></div><div class="flex-1 border-l border-[#efefef]"></div></div>
          <div class="h-[20px] flex border-b border-[#efefef] bg-[#f9f9f9]"><div class="w-[200px] flex items-center pl-[19px]"><svg width="16" height="14"><path d="M1 2h5l1 2h6v3H1z" fill="#f8d878" stroke="#9a7a20"/><path d="M3 7h12l-2 6H1z" fill="#fbe59a" stroke="#9a7a20"/></svg><span class="ml-[3px] tracking-normal">模型历史记录</span></div><div class="w-[100px] border-l border-[#efefef]"></div><div class="flex-1 border-l border-[#efefef]"></div></div>
          <div class="h-[20px] flex border-b border-[#efefef]"><div class="w-[200px] flex items-center pl-[41px]"><svg width="13" height="13"><use href="#cb"/></svg><svg class="ml-[1px]" width="15" height="16"><path d="M2 1v11l11-3M2 8l8 6M5 3v6" fill="none" stroke="#223"/></svg><span class="ml-[3px] whitespace-nowrap">基准坐标系 (0)</span></div><div class="w-[100px] border-l border-[#efefef] pl-[6px] flex items-center"><svg width="13" height="13"><use href="#ck"/></svg></div><div class="flex-1 border-l border-[#efefef]"></div></div>
          <div class="h-[20px] flex border-b border-[#efefef] bg-[#f9f9f9]"><div class="w-[200px] flex items-center pl-[41px]"><svg width="13" height="13"><use href="#cb"/></svg><svg class="ml-[1px]" width="15" height="15"><use href="#sk"/></svg><span class="ml-[3px] whitespace-nowrap text-[#e05a5a]">草图 (1) "SKETCH_0...</span></div><div class="w-[100px] border-l border-[#efefef] pl-[6px] flex items-center"><svg width="13" height="13"><use href="#ck"/></svg></div><div class="flex-1 border-l border-[#efefef]"></div></div>
          <div class="h-[20px] flex border-b border-[#efefef]"><div class="w-[200px] flex items-center pl-[41px]"><svg width="13" height="13"><use href="#cb"/></svg><svg class="ml-[1px]" width="15" height="15"><use href="#sk"/></svg><span class="ml-[3px] whitespace-nowrap text-[#e05a5a]">草图 (2) "SKETCH_0...</span></div><div class="w-[100px] border-l border-[#efefef] pl-[6px] flex items-center"><svg width="13" height="13"><use href="#ck"/></svg></div><div class="flex-1 border-l border-[#efefef]"></div></div>
          <div class="h-[20px] flex bg-white border-b border-[#efefef]"><div class="w-[200px] flex items-center pl-[41px]"><svg class="shrink-0" width="13" height="13"><use href="#cb"/></svg><svg class="ml-[1px] shrink-0" width="15" height="15"><path d="M1 8l6-6 6 4-3 7-5 0z" fill="#f0e6f2" stroke="#c03030"/><path d="M5 5l6 3" stroke="#3a5fb0"/><circle cx="4" cy="11" r="2.500" fill="#c04030"/></svg><span class="ml-[1px] flex-1 h-full flex items-center pl-[2px] bg-[#84bccc] border-y border-l border-dotted border-[#1a3a4a] whitespace-nowrap">扫掠 (3)</span></div><div class="w-[100px] bg-[#84bccc] border-l border-white/60 border-y-[1px] border-y-[#1a3a4a] border-dotted pl-[6px] flex items-center"><svg width="13" height="13"><use href="#ck"/></svg></div><div class="flex-1 bg-[#84bccc] border-l border-white/60 border-y-[1px] border-y-[#1a3a4a] border-dotted"></div></div>
          <div class="h-[20px] flex border-b border-[#efefef]"><div class="w-[200px] flex items-center pl-[41px]"><svg width="13" height="13"><use href="#cb"/></svg><svg class="ml-[1px]" width="15" height="15"><use href="#ex"/></svg><span class="ml-[3px] whitespace-nowrap text-[#4a6fc0]">拉伸 (4)</span></div><div class="w-[100px] border-l border-[#efefef] pl-[6px] flex items-center"><svg width="13" height="13"><use href="#ck"/></svg></div><div class="flex-1 border-l border-[#efefef]"></div></div>
          <div class="h-[20px] flex border-b border-[#efefef] bg-[#f9f9f9]"><div class="w-[200px] flex items-center pl-[41px]"><svg width="13" height="13"><use href="#cb"/></svg><svg class="ml-[1px]" width="15" height="15"><use href="#sk"/></svg><span class="ml-[3px] whitespace-nowrap">草图 (5) "SKETCH_0...</span></div><div class="w-[100px] border-l border-[#efefef] pl-[6px] flex items-center"><svg width="13" height="13"><use href="#ck"/></svg></div><div class="flex-1 border-l border-[#efefef]"></div></div>
          <div class="h-[20px] flex border-b border-[#efefef]"><div class="w-[200px] flex items-center pl-[41px]"><svg width="13" height="13"><use href="#cb"/></svg><svg class="ml-[1px]" width="15" height="15"><use href="#ex"/></svg><span class="ml-[3px] whitespace-nowrap">拉伸 (6)</span></div><div class="w-[100px] border-l border-[#efefef] pl-[6px] flex items-center"><svg width="13" height="13"><use href="#ck"/></svg></div><div class="flex-1 border-l border-[#efefef]"></div></div>
          <div class="h-[20px] flex border-b border-[#efefef] bg-[#f9f9f9]"><div class="w-[200px] flex items-center pl-[41px]"><svg width="13" height="13"><use href="#cb"/></svg><svg class="ml-[1px]" width="15" height="15"><path d="M1 10l6-8 7 8-7 4z" fill="#f4e6f2" stroke="#8a4a6a"/><ellipse cx="7" cy="8" rx="3" ry="2" fill="#d6a6c8" stroke="#8a4a6a"/></svg><span class="ml-[3px] font-bold whitespace-nowrap">拔模 (7)</span></div><div class="w-[100px] border-l border-[#efefef] pl-[6px] flex items-center"><svg width="13" height="13"><use href="#ck"/></svg></div><div class="flex-1 border-l border-[#efefef]"></div></div>
          <div class="h-[20px] flex border-b border-[#efefef]"><div class="w-[200px]"></div><div class="w-[100px] border-l border-[#efefef]"></div><div class="flex-1 border-l border-[#efefef]"></div></div>
          <div class="h-[20px] flex border-b border-[#efefef] bg-[#f9f9f9]"><div class="w-[200px]"></div><div class="w-[100px] border-l border-[#efefef]"></div><div class="flex-1 border-l border-[#efefef]"></div></div>
          <div class="h-[20px] flex border-b border-[#efefef]"><div class="w-[200px]"></div><div class="w-[100px] border-l border-[#efefef]"></div><div class="flex-1 border-l border-[#efefef]"></div></div>
          <div class="h-[20px] flex border-b border-[#efefef] bg-[#f9f9f9]"><div class="w-[200px]"></div><div class="w-[100px] border-l border-[#efefef]"></div><div class="flex-1 border-l border-[#efefef]"></div></div>
          <div class="h-[20px] flex border-b border-[#efefef]"><div class="w-[200px]"></div><div class="w-[100px] border-l border-[#efefef]"></div><div class="flex-1 border-l border-[#efefef]"></div></div>
          <div class="h-[20px] flex border-b border-[#efefef] bg-[#f9f9f9]"><div class="w-[200px]"></div><div class="w-[100px] border-l border-[#efefef]"></div><div class="flex-1 border-l border-[#efefef]"></div></div>
          <div class="flex-1 flex"><div class="w-[200px]"></div><div class="w-[100px] border-l border-[#efefef]"></div><div class="flex-1 border-l border-[#efefef]"></div></div>
        </div>
        <!-- tree connectors -->
        <svg class="absolute left-[0px] top-[22px] pointer-events-none" width="80" height="240" viewBox="35 229 80 240"><path d="M45 238h9M45 248v14M45 258h4M45 268v8M45 278h12M45 288v6M45 298h4M62 306V458M62 318h13M62 338h13M62 358h13M62 378h13M62 398h13M62 418h13M62 438h13M62 458h13" fill="none" stroke="#999" stroke-dasharray="1 1"/><g fill="#fff" stroke="#bbb"><rect x="41.500" y="254.500" width="7" height="7"/><rect x="41.500" y="274.500" width="7" height="7"/><rect x="41.500" y="294.500" width="7" height="7"/></g><path d="M43 258h4M45 256v4M43 278h4M45 276v4M43 298h4" stroke="#222"/></svg>
        <!-- scrollbar -->
        <div class="h-[17px] mb-[1px] bg-[#f0f0f0] flex items-center justify-between relative">
          <div class="w-[18px] flex justify-center"><svg width="7" height="8"><path d="M6 0.500L1.500 4 6 7.500" fill="none" stroke="#444" stroke-width="1.600"/></svg></div>
          <div class="absolute left-[18px] w-[208px] h-[15px] bg-[#c6c6c6]"></div>
          <div class="w-[18px] flex justify-center"><svg width="7" height="8"><path d="M1 0.500L5.500 4 1 7.500" fill="none" stroke="#444" stroke-width="1.600"/></svg></div>
        </div>
      </div>
      <div class="h-[5px] border border-[#8c8c8c] bg-[#e2e2e2]"></div>
      <div class="h-[24px] flex items-center justify-between pl-[7px] pr-[5px] pt-[2px] border-b-[2px] border-[#d2d2d2] text-[14px] leading-none text-[#1f6f86]">相依性<svg class="-mt-[4px]" width="11" height="9"><path d="M1 1l4.500 6L10 1" fill="none" stroke="#145f78" stroke-width="2"/></svg></div>
      <div class="h-[24px] flex items-center justify-between pl-[7px] pr-[5px] pt-[2px] border-b-[2px] border-[#d2d2d2] text-[14px] leading-none text-[#1f6f86]">细节<svg class="-mt-[4px]" width="11" height="9"><path d="M1 1l4.500 6L10 1" fill="none" stroke="#145f78" stroke-width="2"/></svg></div>
      <div class="h-[24px] flex items-center justify-between pl-[7px] pr-[5px] pt-[2px] border-b-[2px] border-[#d2d2d2] text-[14px] leading-none text-[#1f6f86]">预览<svg class="-mt-[4px]" width="11" height="9"><path d="M1 1l4.500 6L10 1" fill="none" stroke="#145f78" stroke-width="2"/></svg></div>
    </div>

    <!-- viewport -->
    <div class="flex-1 relative border-l border-[#8c8c8c] bg-[linear-gradient(180deg,#b0b0b0_0%,#cfd0d1_35%,#e4e5e7_70%,#e6e7e9_100%)] overflow-hidden">
      <svg class="absolute inset-0" width="1008" height="526" viewBox="354 178 1008 526">
        <defs>
          <linearGradient id="rim" gradientUnits="userSpaceOnUse" x1="557" y1="0" x2="1160" y2="0">
            <stop offset="0" stop-color="#f4a90e"/><stop offset=".1" stop-color="#ee9a10"/><stop offset=".28" stop-color="#ffd318"/><stop offset=".47" stop-color="#ffdf22"/><stop offset=".64" stop-color="#fff133"/><stop offset=".82" stop-color="#f2bd17"/><stop offset="1" stop-color="#e8960c"/>
          </linearGradient>
          <linearGradient id="cyl" gradientUnits="userSpaceOnUse" x1="725" y1="0" x2="975" y2="0">
            <stop offset="0" stop-color="#ffb00a"/><stop offset=".2" stop-color="#f39a05"/><stop offset=".55" stop-color="#ffc60a"/><stop offset=".85" stop-color="#ffc408"/><stop offset="1" stop-color="#f9a90a"/>
          </linearGradient>
          <clipPath id="sheetClip"><path d="M519 399C600 428 680 436 768 431 880 425 990 410 1077 375 1130 353 1185 340 1234 300V373L1221 418 1216 417C1160 450 1110 478 1067 493 1000 520 930 533 868 538 810 544 750 548 694 547 640 545 590 535 545 525L490 513Q482 503 482 493C484 470 505 430 519 399Z"/></clipPath>
        </defs>
        <path d="M519 399C600 428 680 436 768 431 880 425 990 410 1077 375 1130 353 1185 340 1234 300V373L1221 418 1216 417C1160 450 1110 478 1067 493 1000 520 930 533 868 538 810 544 750 548 694 547 640 545 590 535 545 525L490 513Q482 503 482 493C484 470 505 430 519 399Z" fill="#bab4ad"/>
        <path d="M725 401C727 385 730 376 734 370 755 340 810 318 883 318 915 318 940 325 952 335L975 368C900 372 800 385 725 401Z" fill="url(#cyl)" stroke="#222" stroke-width=".7"/>
        <path d="M557 469C640 420 780 370 967 368 1040 368 1110 380 1157 397L1160 433C1110 424 1040 417 960 418 800 420 660 465 562 504Z" fill="url(#rim)" stroke="#222" stroke-width=".7"/>
        <path d="M562 504C660 465 800 420 960 418 1040 417 1110 424 1160 433 1130 460 1060 495 967 520 900 538 810 546 749 546 700 546 640 545 599 527 585 520 572 513 562 504Z" fill="#6a4300" stroke="#2a1c00" stroke-width=".5"/>
        <path d="M557 469 562 504M1157 397 1160 433" stroke="#222" stroke-width=".8"/>
        <path clip-path="url(#sheetClip)" d="M557 469C640 420 780 370 967 368 1040 368 1110 380 1157 397L1160 433C1110 424 1040 417 960 418 800 420 660 465 562 504Z" fill="#b5a98c" fill-opacity=".35"/>
        <path d="M519 399C600 428 680 436 768 431 880 425 990 410 1077 375 1130 353 1185 340 1234 300V373L1221 418 1216 417C1160 450 1110 478 1067 493 1000 520 930 533 868 538 810 544 750 548 694 547 640 545 590 535 545 525L490 513Q482 503 482 493C484 470 505 430 519 399Z" fill="none" stroke="#f0a262" stroke-width="2.500"/>
        <!-- work triad -->
        <path d="M851 405 865 537M860 454 925 447 935 503 932 533M860 454 856 478 865 537" fill="none" stroke="#ededed" stroke-width=".9"/>
        <path d="M851 398l3 11h-6z" fill="#f2f2f2" stroke="#777" stroke-width=".4"/>
        <text x="847" y="392" font-size="9" fill="#d8d8d8" font-family="Liberation Sans">Z</text>
        <path d="M868 517 985 503" stroke="#1414d0" stroke-width="1.200" stroke-dasharray="5 2"/>
        <path d="M985 499l14 3-13 4z" fill="#1414d0"/>
        <text x="1004" y="504" font-size="10" fill="#1414d0" font-family="Liberation Sans">X</text>
        <path d="M868 517 865 540 932 533 935 507" fill="none" stroke="#1414d0" stroke-dasharray="4 1"/>
        <path d="M865 538 861 562" stroke="#1414d0"/>
        <path d="M858 560h6l1 6-4 5-4-5z" fill="#1414d0"/>
        <text x="857" y="576" font-size="10" fill="#1414d0" font-family="Liberation Sans">Y</text>
        <!-- view triad -->
        <path d="M398 635l18-2 3 25-19 3z" fill="#c8c8c8" stroke="#aaa"/>
        <path d="M393 628l7 24" stroke="#2040c0" stroke-width="2.500"/>
        <path d="M400 654l28-3" stroke="#c03040" stroke-width="2.500"/>
        <path d="M428 648l7 3-7 2z" fill="#c03040"/>
        <path d="M400 654l-2 13" stroke="#3a8a4a" stroke-width="1.500"/>
        <circle cx="400" cy="654" r="3.500" fill="#f0f0f0" stroke="#999"/>
        <text x="390" y="625" font-size="11" fill="#2040c0" font-family="Liberation Sans">Z</text>
        <text x="432" y="655" font-size="11" fill="#c85060" font-family="Liberation Sans">X</text>
        <text x="393" y="672" font-size="10" fill="#5a9a6a" font-family="Liberation Sans">Y</text>
      </svg>
    </div>
  </main>

  <!-- status -->
  <footer class="h-[22px] shrink-0 border-t border-[#9e9e9e] bg-white flex items-center text-[11px] leading-none">
    <div class="w-[625px]"></div>
    <div class="w-[646px] font-bold text-[#222] pb-[3px]">全部 1</div>
    <svg width="15" height="15"><rect width="15" height="15" fill="#d6d6d6"/><path d="M2 3l2 2 3-2 2 3 3-2M2 8l3 3 2-3 3 4 3-3" stroke="#999" fill="none" stroke-dasharray="1 1"/></svg>
    <svg class="ml-[5px]" width="16" height="15"><path d="M1 4V1h3M12 1h3v3M15 11v3h-3M4 14H1v-3" fill="none" stroke="#555"/><rect x="4" y="4" width="8" height="7" fill="#4a7aba" stroke="#334"/></svg>
  </footer>

  <!-- network widget overlay -->
  <div class="absolute left-[1240px] top-[154px] w-[108px] h-[38px] rounded-full bg-[linear-gradient(180deg,#f4f4f4,#d8d8d8)] shadow-[0_1px_3px_rgba(0,0,0,.35)] text-[10px] leading-none text-[#333]">
    <div class="absolute right-[29px] top-[4px] [font-family:'Liberation_Sans',sans-serif] text-right leading-[15px]">22K/s<br>220K/s</div>
    <svg class="absolute left-[32px] top-[7px]" width="8" height="26"><path d="M4 1l3 4H5v4H3V5H1z" fill="#d0504a"/><path d="M4 25l3-4H5v-4H3v4H1z" fill="#3f9a5a"/></svg>
    <div class="absolute right-[6px] top-[8px] w-[20px] h-[20px] rounded-full bg-[#2f7ad0] text-white text-[18px] leading-[19px] font-bold text-center [font-family:'Liberation_Sans',sans-serif]">+</div>
    <div class="absolute right-[5px] top-[9px] w-[7px] h-[7px] rounded-full bg-[#e03030]"></div>
  </div>
  <div class="absolute left-[1222px] top-[150px] w-[47px] h-[47px] rounded-full border-[3px] border-[#e8efe8] shadow-[0_1px_4px_rgba(0,0,0,.5)] overflow-hidden bg-[linear-gradient(180deg,#0f7a4c_0%,#0e7148_45%,#2fc25c_45%,#2fbc58_100%)] flex items-center justify-center text-white text-[14px] leading-none">52%</div>
  <svg class="absolute left-[1350px] top-[165px]" width="7" height="4"><use href="#cap"/></svg>

  <!-- watermark overlay -->
  <svg class="absolute left-[1077px] top-[630px]" width="76" height="84" viewBox="0 0 76 84">
    <path d="M38 2l35 20v40L38 82 3 62V22z" fill="#92d0f2"/>
    <path d="M38 2l35 20-18 18-10-12-28 2C22 16 30 8 38 2z" fill="#c2e4f6"/>
    <path d="M3 22l18-6 10 12-6 30-22 4z" fill="#b4ddf5"/>
    <path d="M73 22v40L38 82l-12-26 28-10z" fill="#7cc6ee"/>
    <path d="M38 22l19 11v20L38 64 19 53V33z" fill="none" stroke="#d8e8f0" stroke-width="5"/>
    <path d="M38 28l14 8-14 8-14-8z" fill="#cde8f8"/>
    <path d="M24 36l14 8v15l-14-8z" fill="#a8d8f5"/>
    <path d="M52 36l-14 8v15l14-8z" fill="#78c2ec"/>
  </svg>
  <div class="absolute left-[1158px] top-[642px] text-[41px] leading-none font-bold text-white/50 whitespace-nowrap [font-family:'Liberation_Sans','Noto_Sans_CJK_SC',sans-serif]">3D世界网</div>
  <div class="absolute left-[1161px] top-[688px] text-[15px] leading-none font-bold tracking-[4.500px] text-white/45 whitespace-nowrap [font-family:'Liberation_Sans',sans-serif]">WWW.3DSJW.COM</div>
</div>
</body>
</html>
